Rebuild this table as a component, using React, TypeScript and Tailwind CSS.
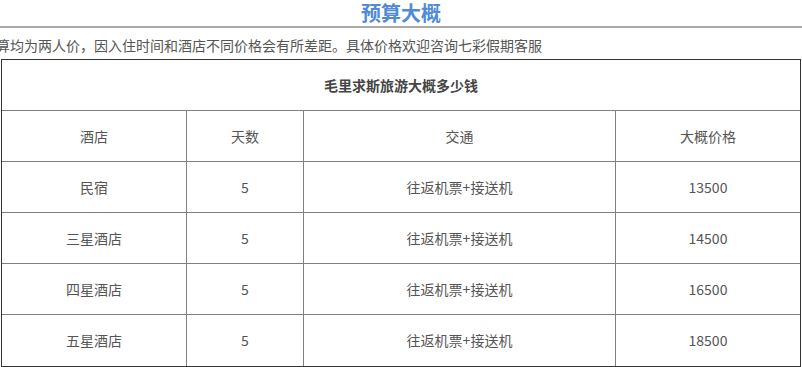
const rows = [
  { hotel: '民宿', days: '5', transport: '往返机票+接送机', price: '13500' },
  { hotel: '三星酒店', days: '5', transport: '往返机票+接送机', price: '14500' },
  { hotel: '四星酒店', days: '5', transport: '往返机票+接送机', price: '16500' },
  { hotel: '五星酒店', days: '5', transport: '往返机票+接送机', price: '18500' },
];

const headers = ['酒店', '天数', '交通', '大概价格'];

const font = { fontFamily: '"Noto Sans CJK SC", "Microsoft YaHei", sans-serif' };

function Cell({ children, last, bottom }: { children: React.ReactNode; last?: boolean; bottom?: boolean }) {
  return (
    <div
      className={`flex h-[51px] items-center justify-center text-[14px] text-[#555] ${
        last ? '' : 'border-r border-[#808080]'
      } ${bottom ? '' : 'border-b border-[#808080]'}`}
    >
      {children}
    </div>
  );
}

export default function App() {
  return (
    <div className="h-[367px] w-[802px] overflow-hidden bg-white" style={font}>
      <h2 className="h-[28px] border-b-2 border-[#aaa] text-center text-[20px] font-bold leading-[26px] text-[#4f8bd6]">
        预算大概
      </h2>

      <p className="ml-[-18px] whitespace-nowrap pt-[6px] pb-[3px] text-[14px] leading-[22px] text-[#555]">
        预算均为两人价，因入住时间和酒店不同价格会有所差距。具体价格欢迎咨询七彩假期客服
      </p>

      <div className="ml-[1px] w-[800px] border border-[#333]">
        <div className="flex h-[51px] items-center justify-center border-b border-[#808080] text-[14px] font-bold text-[#444]">
          毛里求斯旅游大概多少钱
        </div>
        <div className="grid grid-cols-[185px_117px_312px_184px]">
          {headers.map((h, i) => (
            <Cell key={h} last={i === 3}>
              {h}
            </Cell>
          ))}
          {rows.map((r, ri) => {
            const bottom = ri === rows.length - 1;
            return [
              <Cell key={`${ri}-h`} bottom={bottom}>{r.hotel}</Cell>,
              <Cell key={`${ri}-d`} bottom={bottom}>{r.days}</Cell>,
              <Cell key={`${ri}-t`} bottom={bottom}>{r.transport}</Cell>,
              <Cell key={`${ri}-p`} bottom={bottom} last>{r.price}</Cell>,
            ];
          })}
        </div>
      </div>
    </div>
  );
}
